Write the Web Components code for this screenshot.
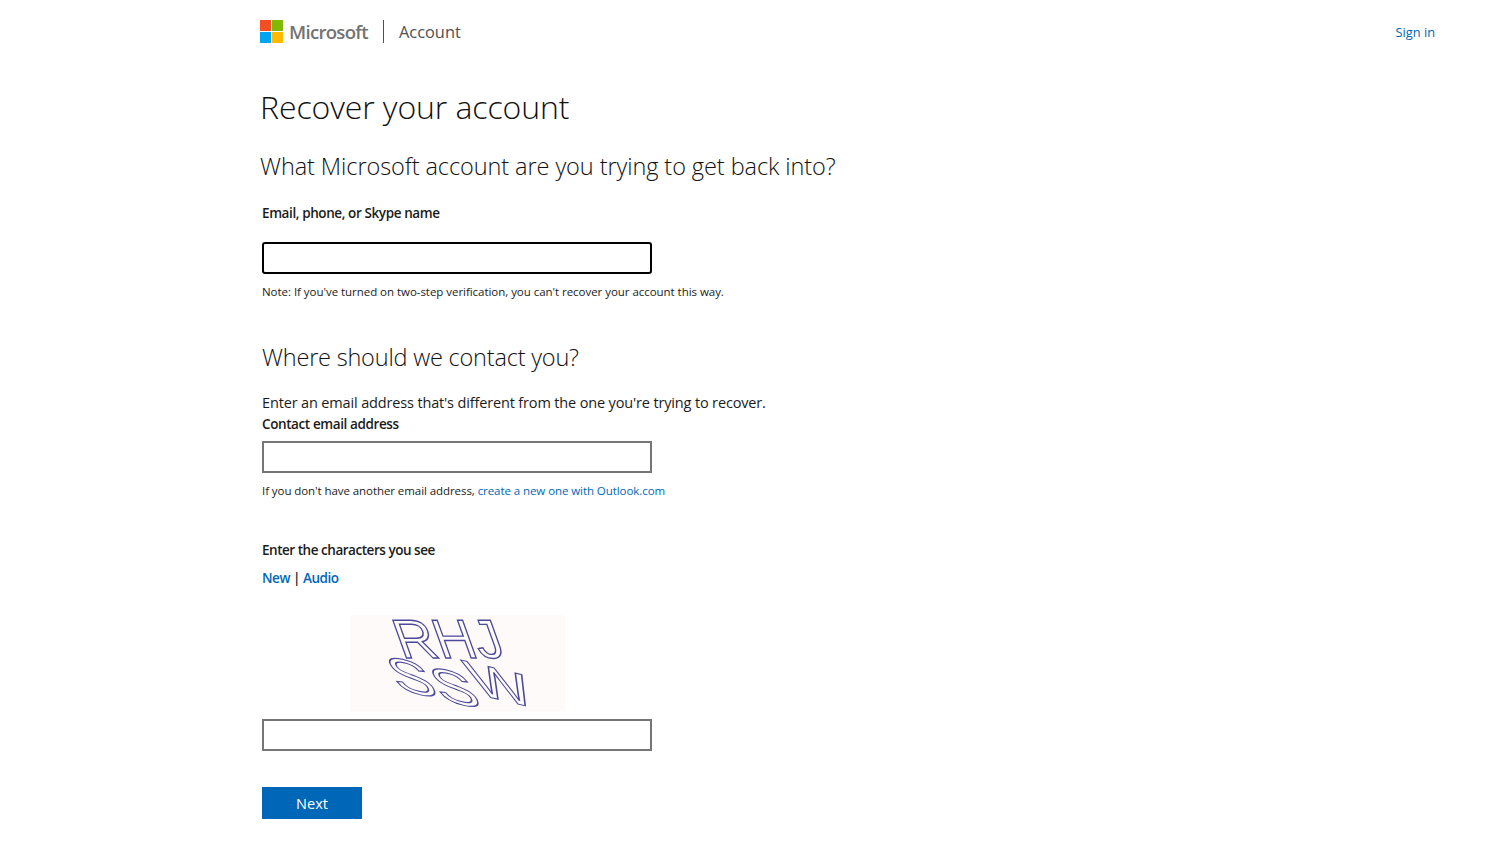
<!DOCTYPE html>
<html lang="en">
<head>
<meta charset="utf-8">
<title>Recover your account</title>
<style>
  html, body { margin: 0; background: #fff; }
  body { font-family: "Open Sans", "Liberation Sans", sans-serif; color: #1b1b1b; overflow: hidden; }
  main { display: flex; flex-direction: column; align-items: flex-start; padding-left: 262px; }
</style>
</head>
<body>
<ms-header></ms-header>
<main>
  <ms-heading size="title" style="margin-top:22px;margin-left:-2px">Recover your account</ms-heading>
  <ms-heading size="sub" style="margin-top:21px;margin-left:-2px;letter-spacing:-0.08px">What Microsoft account are you trying to get back into?</ms-heading>
  <ms-label style="margin-top:21px">Email, phone, or Skype name</ms-label>
  <ms-input focused style="margin-top:19px"></ms-input>
  <ms-note style="margin-top:10px;letter-spacing:-0.04px">Note: If you've turned on two-step verification, you can't recover your account this way.</ms-note>
  <ms-heading size="sub" style="margin-top:41px;letter-spacing:-0.2px">Where should we contact you?</ms-heading>
  <ms-text style="margin-top:20px">Enter an email address that's different from the one you're trying to recover.</ms-text>
  <ms-label style="margin-top:1px">Contact email address</ms-label>
  <ms-input style="margin-top:7px"></ms-input>
  <ms-note style="margin-top:10px;letter-spacing:-0.07px">If you don't have another email address, <a href="#" style="color:#0067b8;text-decoration:none">create a new one with Outlook.com</a></ms-note>
  <ms-label style="margin-top:41px;letter-spacing:-0.47px">Enter the characters you see</ms-label>
  <ms-captcha-links style="margin-top:8px"></ms-captcha-links>
  <ms-captcha style="margin-top:27px;margin-left:88px"></ms-captcha>
  <ms-input style="margin-top:8px"></ms-input>
  <ms-button style="margin-top:36px">Next</ms-button>
</main>
<script>
  class MsHeader extends HTMLElement {
    constructor() {
      super();
      const shadow = this.attachShadow({ mode: 'open' });
      shadow.innerHTML = `
        <style>
          :host { display: flex; align-items: center; height: 63px; padding-left: 260px; padding-right: 61px; }
          svg { display: block; flex: none; }
          .word { margin-left: 6px; font-size: 18.6px; font-weight: 600; color: #737373; letter-spacing: -0.72px; line-height: 24px; }
          .bar { width: 1px; height: 23px; background: #505050; margin-left: 15px; }
          .product { margin-left: 15px; font-size: 16.4px; color: #505050; line-height: 24px; }
          a { margin-left: auto; font-size: 12.8px; color: #0067b8; text-decoration: none; }
        </style>
        <svg width="23" height="23" viewBox="0 0 23 23" aria-hidden="true">
          <rect width="11" height="11" fill="#f25022"/>
          <rect x="12" width="11" height="11" fill="#7fba00"/>
          <rect y="12" width="11" height="11" fill="#00a4ef"/>
          <rect x="12" y="12" width="11" height="11" fill="#ffb900"/>
        </svg>
        <span class="word">Microsoft</span>
        <span class="bar"></span>
        <span class="product">Account</span>
        <a href="#">Sign in</a>
      `;
    }
  }

  class MsHeading extends HTMLElement {
    constructor() {
      super();
      const shadow = this.attachShadow({ mode: 'open' });
      shadow.innerHTML = `
        <style>
          :host { display: block; font-weight: 300; color: #111; }
          :host([size=title]) { font-size: 32px; line-height: 44px; letter-spacing: -0.1px; }
          :host([size=sub]) { font-size: 23.5px; line-height: 32px; }
        </style>
        <slot></slot>
      `;
    }
  }

  class MsLabel extends HTMLElement {
    constructor() {
      super();
      const shadow = this.attachShadow({ mode: 'open' });
      shadow.innerHTML = `
        <style>
          :host { display: block; font-size: 13.5px; font-weight: 600; line-height: 20px; letter-spacing: -0.4px; }
        </style>
        <slot></slot>
      `;
    }
  }

  class MsText extends HTMLElement {
    constructor() {
      super();
      const shadow = this.attachShadow({ mode: 'open' });
      shadow.innerHTML = `
        <style>
          :host { display: block; font-size: 14.5px; line-height: 20px; letter-spacing: -0.15px; }
        </style>
        <slot></slot>
      `;
    }
  }

  class MsNote extends HTMLElement {
    constructor() {
      super();
      const shadow = this.attachShadow({ mode: 'open' });
      shadow.innerHTML = `
        <style>
          :host { display: block; font-size: 11.5px; line-height: 16px; }
        </style>
        <slot></slot>
      `;
    }
  }

  class MsInput extends HTMLElement {
    constructor() {
      super();
      const shadow = this.attachShadow({ mode: 'open' });
      shadow.innerHTML = `
        <style>
          :host { display: block; }
          input { display: block; box-sizing: border-box; width: 390px; height: 32px; margin: 0; padding: 4px 8px; border: 2px solid #767676; border-radius: 0; background: #fff; outline: none; font: inherit; }
          :host([focused]) input { border-color: #000; border-radius: 3px; }
        </style>
        <input type="text">
      `;
    }
  }

  class MsCaptchaLinks extends HTMLElement {
    constructor() {
      super();
      const shadow = this.attachShadow({ mode: 'open' });
      shadow.innerHTML = `
        <style>
          :host { display: flex; gap: 3px; font-size: 13.5px; font-weight: 600; line-height: 20px; letter-spacing: -0.45px; }
          a { color: #0067b8; text-decoration: none; }
          i { font-style: normal; color: #1b1b1b; }
        </style>
        <a href="#">New</a><i>|</i><a href="#">Audio</a>
      `;
    }
  }

  class MsCaptcha extends HTMLElement {
    constructor() {
      super();
      const shadow = this.attachShadow({ mode: 'open' });
      shadow.innerHTML = `
        <style>
          :host { display: block; width: 215px; height: 96px; background: #fffafa; }
          svg { display: block; overflow: visible; }
          text { font-family: "Liberation Sans", sans-serif; fill: #fffafa; stroke: #4a4a98; stroke-width: 1.4px; }
        </style>
        <svg width="215" height="96" viewBox="0 0 215 96">
          <text transform="matrix(1 0 0.36 1 52 43)" font-size="55" textLength="106" lengthAdjust="spacingAndGlyphs">RHJ</text>
          <text transform="matrix(1 0.24 0.42 0.86 48 74)" font-size="58" textLength="148" lengthAdjust="spacingAndGlyphs" dy="0 0 -18">SSW</text>
        </svg>
      `;
    }
  }

  class MsButton extends HTMLElement {
    constructor() {
      super();
      const shadow = this.attachShadow({ mode: 'open' });
      shadow.innerHTML = `
        <style>
          :host { display: block; }
          button { display: block; width: 100px; height: 32px; padding: 0; border: 0; background: #0067b8; color: #fff; font: inherit; font-size: 14.5px; cursor: pointer; }
        </style>
        <button type="button"><slot></slot></button>
      `;
    }
  }

  customElements.define('ms-header', MsHeader);
  customElements.define('ms-heading', MsHeading);
  customElements.define('ms-label', MsLabel);
  customElements.define('ms-text', MsText);
  customElements.define('ms-note', MsNote);
  customElements.define('ms-input', MsInput);
  customElements.define('ms-captcha-links', MsCaptchaLinks);
  customElements.define('ms-captcha', MsCaptcha);
  customElements.define('ms-button', MsButton);
</script>
</body>
</html>
